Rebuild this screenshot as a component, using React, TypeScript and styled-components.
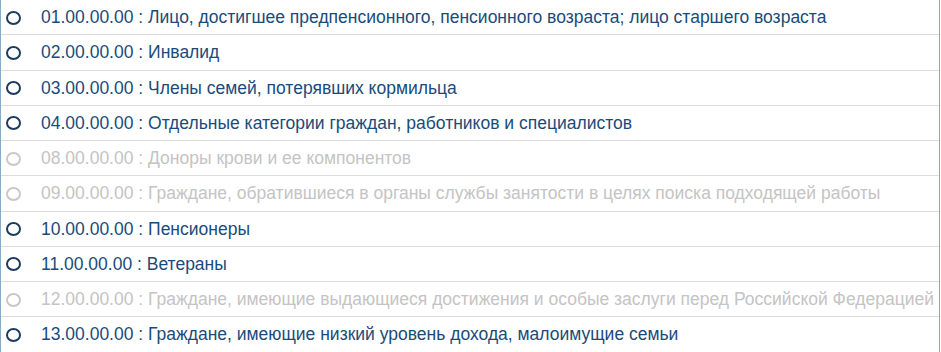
import styled, { createGlobalStyle } from 'styled-components';

const GlobalStyle = createGlobalStyle`
  html, body {
    margin: 0;
    padding: 0;
    background: #ffffff;
  }
`;

const categories = [
  { code: '01.00.00.00', title: 'Лицо, достигшее предпенсионного, пенсионного возраста; лицо старшего возраста', active: true },
  { code: '02.00.00.00', title: 'Инвалид', active: true },
  { code: '03.00.00.00', title: 'Члены семей, потерявших кормильца', active: true },
  { code: '04.00.00.00', title: 'Отдельные категории граждан, работников и специалистов', active: true },
  { code: '08.00.00.00', title: 'Доноры крови и ее компонентов', active: false },
  { code: '09.00.00.00', title: 'Граждане, обратившиеся в органы службы занятости в целях поиска подходящей работы', active: false },
  { code: '10.00.00.00', title: 'Пенсионеры', active: true },
  { code: '11.00.00.00', title: 'Ветераны', active: true },
  { code: '12.00.00.00', title: 'Граждане, имеющие выдающиеся достижения и особые заслуги перед Российской Федерацией', active: false },
  { code: '13.00.00.00', title: 'Граждане, имеющие низкий уровень дохода, малоимущие семьи', active: true },
];

const CategoryList = styled.ul`
  list-style: none;
  margin: 0;
  padding: 0;
  width: 938px;
  border-left: 1px solid #86acc6;
  border-right: 1px solid #86acc6;
  border-bottom: 1px solid #86acc6;
  font-family: "Liberation Sans", Arial, sans-serif;
`;

const CategoryRow = styled.li<{ $active: boolean }>`
  display: flex;
  align-items: center;
  height: 34.25px;
  padding-left: 5px;
  border-bottom: 1px solid #dcdcdc;
  color: ${p => (p.$active ? '#1b4b7a' : '#c4c4c4')};
  font-size: 17.5px;
  white-space: nowrap;
  overflow: hidden;
  cursor: ${p => (p.$active ? 'pointer' : 'default')};

  &:last-child {
    border-bottom: none;
  }
`;

const Radio = styled.span<{ $active: boolean }>`
  flex: none;
  box-sizing: border-box;
  width: 15px;
  height: 14px;
  border-radius: 50%;
  border: 2.5px solid ${p => (p.$active ? '#1c3b5e' : '#c8c8c8')};
  margin-right: 20px;
  margin-top: 1px;
`;

const Label = styled.span`
  line-height: 20px;
`;

export default function App() {
  return (
    <>
      <GlobalStyle />
      <CategoryList>
        {categories.map(c => (
          <CategoryRow key={c.code} $active={c.active}>
            <Radio $active={c.active} />
            <Label>
              {c.code} : {c.title}
            </Label>
          </CategoryRow>
        ))}
      </CategoryList>
    </>
  );
}
